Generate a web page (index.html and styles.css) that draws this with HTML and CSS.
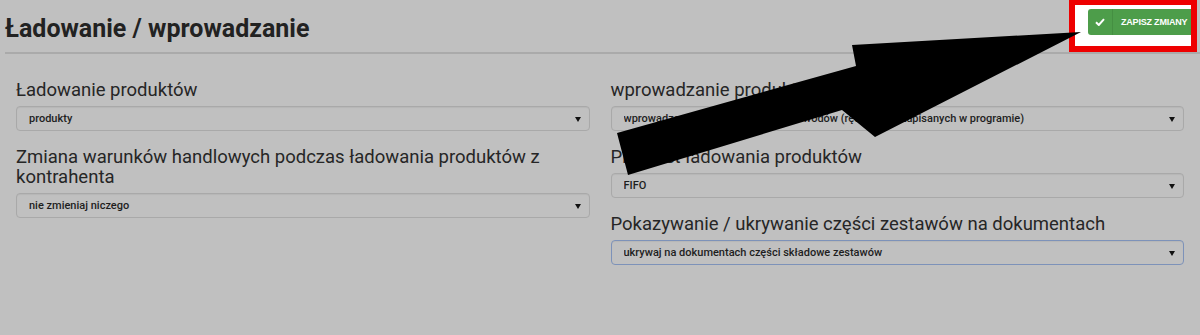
FILE: index.html
```html
<!DOCTYPE html>
<html lang="pl">
<head>
    <meta charset="UTF-8">
    <title>Ładowanie / wprowadzanie</title>
    <link rel="stylesheet" href="styles.css">
</head>
<body>
    <div class="page">
        <div class="header">
            <h1>Ładowanie / wprowadzanie</h1>
            <div class="highlight">
                <button class="btn-save" type="button">
                    <span class="btn-icon">
                        <svg width="10" height="8" viewBox="0 0 10 8"><path d="M1 4.2 L3.8 7 L9 1.2" fill="none" stroke="#fff" stroke-width="2"/></svg>
                    </span>
                    <span class="btn-text">ZAPISZ ZMIANY</span>
                </button>
            </div>
        </div>

        <form class="settings">
            <div class="col">
                <div class="group">
                    <label for="lp">Ładowanie produktów</label>
                    <div class="select-wrap"><select id="lp"><option>produkty</option></select></div>
                </div>
                <div class="group">
                    <label for="zw">Zmiana warunków handlowych podczas ładowania produktów z kontrahenta</label>
                    <div class="select-wrap"><select id="zw"><option>nie zmieniaj niczego</option></select></div>
                </div>
            </div>
            <div class="col">
                <div class="group">
                    <label for="wp">wprowadzanie produktów</label>
                    <div class="select-wrap"><select id="wp"><option>wprowadzanie produktów według dowodów (ręcznie lub zapisanych w programie)</option></select></div>
                </div>
                <div class="group">
                    <label for="pl">Priorytet ładowania produktów</label>
                    <div class="select-wrap"><select id="pl"><option>FIFO</option></select></div>
                </div>
                <div class="group">
                    <label for="uz">Pokazywanie / ukrywanie części zestawów na dokumentach</label>
                    <div class="select-wrap"><select id="uz" class="focused"><option>ukrywaj na dokumentach części składowe zestawów</option></select></div>
                </div>
            </div>
        </form>
    </div>

    <!-- annotation arrow drawn over the page -->
    <svg class="arrow" width="1200" height="335" viewBox="0 0 1200 335">
        <polygon points="617,133 856,66 852,45 1081,32 875,137 842,110 628,175" fill="#000"/>
    </svg>
</body>
</html>
```

FILE: styles.css
```css
body {
    margin: 0;
    padding: 0;
    background-color: #c0c0c0;
    font-family: Roboto, "Liberation Sans", sans-serif;
    color: #2a2a2a;
}
.page {
    margin-left: 5px;
}
.header {
    display: flex;
    justify-content: space-between;
    align-items: flex-start;
    height: 52px;
    border-bottom: 2px solid #aaaaaa;
}
h1 {
    margin: 14px 0 0;
    font-size: 25px;
    line-height: 30px;
    font-weight: 700;
    color: #222;
}
.highlight {
    margin-right: 3px;
    width: 103px;
    height: 37px;
    border: 6px solid #ee0000;
    border-top-width: 5px;
    background-color: #fff;
    padding: 4px 0 0 13px;
}
.btn-save {
    display: flex;
    align-items: stretch;
    width: 103px;
    height: 26px;
    padding: 0;
    border: none;
    border-radius: 3px 0 0 3px;
    background-color: #4d9d4a;
    color: #fff;
    cursor: pointer;
}
.btn-icon {
    width: 24px;
    display: flex;
    align-items: center;
    justify-content: center;
    border-right: 1px solid #458f42;
}
.btn-text {
    flex: 1;
    display: flex;
    align-items: center;
    padding-left: 8px;
    font-size: 9px;
    font-weight: 700;
    letter-spacing: -0.2px;
}
.settings {
    display: flex;
    gap: 21px;
    padding: 26px 16px 0 11px;
}
.col {
    flex: 1;
}
.group {
    margin-bottom: 16px;
}
label {
    display: block;
    font-size: 18.5px;
    line-height: 20px;
    font-weight: 400;
    margin-bottom: 6px;
    color: #262626;
}
.select-wrap {
    position: relative;
}
.select-wrap::after {
    content: "";
    position: absolute;
    right: 9px;
    top: 11px;
    border-left: 3px solid transparent;
    border-right: 3px solid transparent;
    border-top: 5px solid #111;
    pointer-events: none;
}
select {
    display: block;
    width: 100%;
    height: 25px;
    padding: 0 12px;
    font-family: Roboto, "Liberation Sans", sans-serif;
    font-size: 11px;
    font-weight: 500;
    color: #1e1e1e;
    background-color: #c0c0c0;
    border: 1px solid #a9a9a9;
    border-radius: 4px;
    box-shadow: inset 0 1px 1px rgba(0, 0, 0, 0.05);
    -webkit-appearance: none;
    appearance: none;
}
select.focused {
    border-color: #7d92b9;
}
.arrow {
    position: absolute;
    left: 0;
    top: 0;
    pointer-events: none;
}
```
